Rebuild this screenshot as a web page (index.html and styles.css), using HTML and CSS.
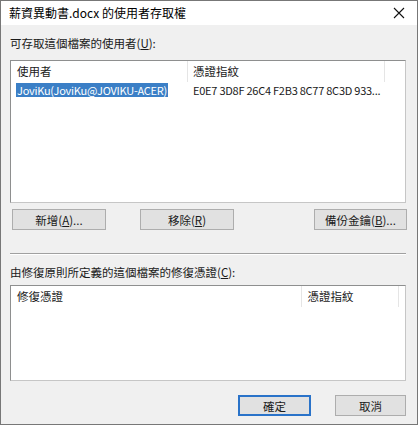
FILE: index.html
```html
<!DOCTYPE html>
<html lang="zh-Hant">
<head>
<meta charset="utf-8">
<title>薪資異動書.docx 的使用者存取權</title>
<link rel="stylesheet" href="styles.css">
</head>
<body>
<div class="window">
  <div class="titlebar">
    <span class="title">薪資異動書.docx 的使用者存取權</span>
    <svg class="close" width="12" height="12" viewBox="0 0 12 12"><path d="M1 1 L11 11 M11 1 L1 11" stroke="#111" stroke-width="1.1" fill="none"/></svg>
  </div>
  <div class="content">
    <div class="label label-users">可存取這個檔案的使用者(<u>U</u>):</div>
    <div class="list list-users">
      <div class="header">
        <div class="hcell col-user">使用者</div>
        <div class="hcell col-thumb">憑證指紋</div>
        <div class="hcell col-rest"></div>
      </div>
      <div class="row">
        <div class="cell col-user"><span class="selected latin">JoviKu(JoviKu@JOVIKU-ACER)</span></div>
        <div class="cell col-thumb latin">E0E7 3D8F 26C4 F2B3 8C77 8C3D 933...</div>
      </div>
    </div>
    <div class="buttons-row">
      <button class="btn btn-add">新增(<u>A</u>)...</button>
      <button class="btn btn-remove">移除(<u>R</u>)</button>
      <button class="btn btn-backup">備份金鑰(<u>B</u>)...</button>
    </div>
    <div class="separator"></div>
    <div class="label label-recovery">由修復原則所定義的這個檔案的修復憑證(<u>C</u>):</div>
    <div class="list list-recovery">
      <div class="header">
        <div class="hcell col-cert">修復憑證</div>
        <div class="hcell col-thumb2">憑證指紋</div>
        <div class="hcell col-rest"></div>
      </div>
    </div>
    <div class="footer">
      <button class="btn btn-ok">確定</button>
      <button class="btn btn-cancel">取消</button>
    </div>
  </div>
</div>
</body>
</html>
```
FILE: styles.css
```css
* { box-sizing: border-box; }
html, body { margin: 0; padding: 0; background: #ffffff; }
body {
  font-family: "Noto Sans CJK TC", "Noto Sans", sans-serif;
  font-size: 11.5px;
  color: #1a1a1a;
}
.window {
  width: 418px;
  height: 425px;
  border: 1px solid #777777;
  background: #f0f0f0;
  display: flex;
  flex-direction: column;
}
.titlebar {
  height: 24px;
  background: #ffffff;
  display: flex;
  align-items: center;
  justify-content: space-between;
  padding: 0 12px 0 8px;
  flex: none;
}
.title { font-size: 12px; color: #000; line-height: 16px; }
.close { display: block; }
.content {
  padding: 0 11px 0 9px;
  display: flex;
  flex-direction: column;
}
.label { line-height: 16px; height: 16px; white-space: nowrap; }
.label-users { margin-top: 10px; }
.list {
  background: #ffffff;
  border: 1px solid #8e8f8f;
  border-right-color: #c6c6c6;
  border-bottom-color: #c6c6c6;
}
.list-users { margin-top: 9px; height: 143px; }
.list-recovery { margin-top: 5px; height: 96px; }
.header { display: flex; height: 21px; }
.hcell {
  line-height: 21px;
  padding-left: 6px;
  border-right: 1px solid #e5e5e5;
  white-space: nowrap;
}
.hcell.col-rest { border-right: none; flex: 1; }
.col-user { width: 177px; }
.col-thumb { width: 197px; padding-left: 5px; }
.col-cert { width: 296px; }
.col-thumb2 { width: 98px; padding-left: 5px; }
.row { display: flex; height: 14px; margin-top: 1px; }
.cell { line-height: 14px; white-space: nowrap; }
.row .col-user { padding-left: 5px; }
.row .col-thumb { padding-left: 5px; }
.latin { font-size: 11px; letter-spacing: -0.25px; }
.selected {
  display: inline-block;
  background: #3b7fc6;
  color: #ffffff;
  padding: 0 1px;
  line-height: 14px;
}
.btn {
  font-family: inherit;
  font-size: 11.5px;
  color: #1a1a1a;
  background: #e1e1e1;
  border: 1px solid #adadad;
  height: 21px;
  padding: 0;
  margin: 0;
  line-height: 18px;
}
.buttons-row {
  display: flex;
  justify-content: space-between;
  margin-top: 6px;
  padding: 0 0 0 2px;
}
.btn-add, .btn-remove, .btn-backup { width: 94px; }
.btn-remove { margin-left: 34px; margin-right: auto; }
.btn-backup { width: 93px; margin-right: -1px; }
.separator {
  margin-top: 23px;
  height: 2px;
  border-top: 1px solid #a0a0a0;
  border-bottom: 1px solid #ffffff;
}
.label-recovery { margin-top: 9px; }
.footer {
  display: flex;
  justify-content: flex-end;
  gap: 24px;
  margin-top: 14px;
}
.btn-ok { border: 2px solid #2a73c9; width: 73px; }
.btn-cancel { width: 71px; }
u { text-decoration: underline; text-underline-offset: 1px; }
```
